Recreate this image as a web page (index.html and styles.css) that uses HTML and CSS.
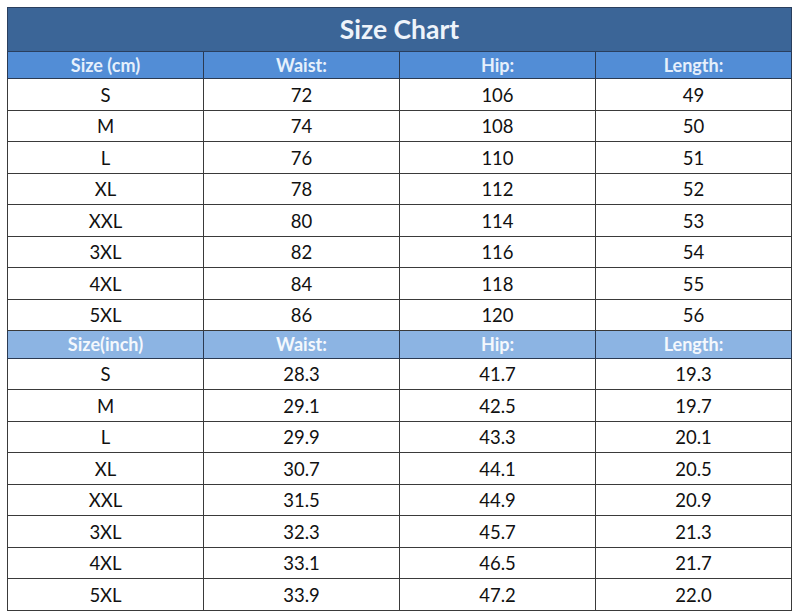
FILE: index.html
```html
<!DOCTYPE html>
<html>
<head>
<meta charset="utf-8">
<link rel="stylesheet" href="styles.css">
</head>
<body>
<table class="chart">
  <thead>
    <tr><th class="title" colspan="4">Size Chart</th></tr>
  </thead>
  <tbody>
    <tr class="head"><td>Size (cm)</td><td>Waist:</td><td>Hip:</td><td>Length:</td></tr>
    <tr><td>S</td><td>72</td><td>106</td><td>49</td></tr>
    <tr><td>M</td><td>74</td><td>108</td><td>50</td></tr>
    <tr><td>L</td><td>76</td><td>110</td><td>51</td></tr>
    <tr><td>XL</td><td>78</td><td>112</td><td>52</td></tr>
    <tr><td>XXL</td><td>80</td><td>114</td><td>53</td></tr>
    <tr><td>3XL</td><td>82</td><td>116</td><td>54</td></tr>
    <tr><td>4XL</td><td>84</td><td>118</td><td>55</td></tr>
    <tr><td>5XL</td><td>86</td><td>120</td><td>56</td></tr>
    <tr class="head light"><td>Size(inch)</td><td>Waist:</td><td>Hip:</td><td>Length:</td></tr>
    <tr><td>S</td><td>28.3</td><td>41.7</td><td>19.3</td></tr>
    <tr><td>M</td><td>29.1</td><td>42.5</td><td>19.7</td></tr>
    <tr><td>L</td><td>29.9</td><td>43.3</td><td>20.1</td></tr>
    <tr><td>XL</td><td>30.7</td><td>44.1</td><td>20.5</td></tr>
    <tr><td>XXL</td><td>31.5</td><td>44.9</td><td>20.9</td></tr>
    <tr><td>3XL</td><td>32.3</td><td>45.7</td><td>21.3</td></tr>
    <tr><td>4XL</td><td>33.1</td><td>46.5</td><td>21.7</td></tr>
    <tr><td>5XL</td><td>33.9</td><td>47.2</td><td>22.0</td></tr>
  </tbody>
</table>
</body>
</html>
```
FILE: styles.css
```css
html, body {
  margin: 0;
  padding: 0;
  background: #ffffff;
}
body {
  padding: 7px 2px 0 7px;
  font-family: Lato, "Open Sans", sans-serif;
}
.chart {
  border-collapse: collapse;
  width: 785px;
  table-layout: fixed;
  color: #111;
}
.chart td, .chart th {
  border: 1.5px solid #3a3a3a;
  text-align: center;
  padding: 1px 0 0;
  font-size: 18.5px;
  line-height: 20px;
  font-weight: 400;
  height: 29.5px;
}
.chart .title {
  background: #3b6597;
  color: #eef3fa;
  font-size: 26.5px;
  line-height: 30px;
  font-weight: 700;
  padding: 0;
  height: 42.5px;
  border-color: #2a3f5e;
}
.chart .head td {
  background: #528dd6;
  color: #e6f0fc;
  font-weight: 700;
  padding: 0;
  height: 26.5px;
  font-size: 18px;
  border-color: #2b3a52;
}
.chart .head.light td {
  background: #8cb4e3;
  color: #f4f8fd;
}
```
